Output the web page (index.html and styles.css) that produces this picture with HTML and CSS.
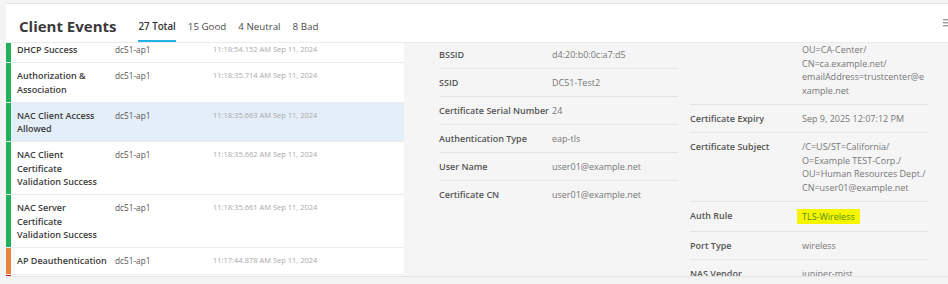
FILE: index.html
```html
<!DOCTYPE html>
<html lang="en">

<head>
    <meta charset="UTF-8">
    <meta name="viewport" content="width=device-width, initial-scale=1.0">
    <title>Client Events</title>
    <link rel="stylesheet" href="styles.css">
</head>

<body>
    <div class="card">
        <div class="card-header">
            <h1 class="title">Client Events</h1>
            <ul class="tabs">
                <li class="tab active">27 Total</li>
                <li class="tab">15 Good</li>
                <li class="tab">4 Neutral</li>
                <li class="tab">8 Bad</li>
            </ul>
            <button class="menu-btn" aria-label="Menu">
                <svg width="12" height="8" viewBox="0 0 12 8">
                    <rect x="0" y="0" width="12" height="1.4" fill="#9a9a9a" />
                    <rect x="0" y="3" width="12" height="1.4" fill="#9a9a9a" />
                    <rect x="0" y="6" width="12" height="1.4" fill="#9a9a9a" />
                </svg>
            </button>
        </div>

        <div class="card-body">
            <!-- Event list (scrolled a little) -->
            <div class="event-list">
                <div class="event-scroll">
                    <div class="event good">
                        <div class="bar"></div>
                        <div class="cells">
                            <div class="ev-name">DHCP Success</div>
                            <div class="ev-host">dc51-ap1</div>
                            <div class="ev-time">11:18:54.152 AM Sep 11, 2024</div>
                        </div>
                    </div>
                    <div class="event good">
                        <div class="bar"></div>
                        <div class="cells">
                            <div class="ev-name">Authorization &amp; Association</div>
                            <div class="ev-host">dc51-ap1</div>
                            <div class="ev-time">11:18:35.714 AM Sep 11, 2024</div>
                        </div>
                    </div>
                    <div class="event good selected">
                        <div class="bar"></div>
                        <div class="cells">
                            <div class="ev-name">NAC Client Access Allowed</div>
                            <div class="ev-host">dc51-ap1</div>
                            <div class="ev-time">11:18:35.663 AM Sep 11, 2024</div>
                        </div>
                    </div>
                    <div class="event good">
                        <div class="bar"></div>
                        <div class="cells">
                            <div class="ev-name">NAC Client Certificate Validation Success</div>
                            <div class="ev-host">dc51-ap1</div>
                            <div class="ev-time">11:18:35.662 AM Sep 11, 2024</div>
                        </div>
                    </div>
                    <div class="event good">
                        <div class="bar"></div>
                        <div class="cells">
                            <div class="ev-name">NAC Server Certificate Validation Success</div>
                            <div class="ev-host">dc51-ap1</div>
                            <div class="ev-time">11:18:35.661 AM Sep 11, 2024</div>
                        </div>
                    </div>
                    <div class="event neutral">
                        <div class="bar"></div>
                        <div class="cells">
                            <div class="ev-name">AP Deauthentication</div>
                            <div class="ev-host">dc51-ap1</div>
                            <div class="ev-time">11:17:44.878 AM Sep 11, 2024</div>
                        </div>
                    </div>
                    <div class="event bad">
                        <div class="bar"></div>
                        <div class="cells"></div>
                    </div>
                </div>
            </div>

            <!-- Event details -->
            <div class="details">
                <div class="detail-col col-left">
                    <div class="detail-row">
                        <div class="d-label">BSSID</div>
                        <div class="d-value">d4:20:b0:0c:a7:d5</div>
                    </div>
                    <div class="detail-row">
                        <div class="d-label">SSID</div>
                        <div class="d-value">DC51-Test2</div>
                    </div>
                    <div class="detail-row">
                        <div class="d-label">Certificate Serial Number</div>
                        <div class="d-value">24</div>
                    </div>
                    <div class="detail-row">
                        <div class="d-label">Authentication Type</div>
                        <div class="d-value">eap-tls</div>
                    </div>
                    <div class="detail-row">
                        <div class="d-label">User Name</div>
                        <div class="d-value">user01@example.net</div>
                    </div>
                    <div class="detail-row">
                        <div class="d-label">Certificate CN</div>
                        <div class="d-value">user01@example.net</div>
                    </div>
                </div>

                <div class="detail-col col-right">
                    <div class="detail-row">
                        <div class="d-label">Certificate Issuer</div>
                        <div class="d-value">/C=US/ST=California/ O=Example TEST-Corp./ OU=CA-Center/ CN=ca.example.net/ emailAddress=trustcenter@example.net</div>
                    </div>
                    <div class="detail-row">
                        <div class="d-label">Certificate Expiry</div>
                        <div class="d-value">Sep 9, 2025 12:07:12 PM</div>
                    </div>
                    <div class="detail-row">
                        <div class="d-label">Certificate Subject</div>
                        <div class="d-value">/C=US/ST=California/ O=Example TEST-Corp./ OU=Human Resources Dept./ CN=user01@example.net</div>
                    </div>
                    <div class="detail-row">
                        <div class="d-label">Auth Rule</div>
                        <div class="d-value"><span class="highlight">TLS-Wireless</span></div>
                    </div>
                    <div class="detail-row">
                        <div class="d-label">Port Type</div>
                        <div class="d-value">wireless</div>
                    </div>
                    <div class="detail-row">
                        <div class="d-label">NAS Vendor</div>
                        <div class="d-value">juniper-mist</div>
                    </div>
                </div>
            </div>
        </div>
    </div>
</body>

</html>
```

FILE: styles.css
```css
/* Reset styles */
* {
    margin: 0;
    padding: 0;
    box-sizing: border-box;
}

html,
body {
    overflow: hidden;
}

/* Global styles */
body {
    background-color: #f4f4f4;
    font-family: "Open Sans", "Noto Sans", Arial, sans-serif;
    color: #444;
    padding-top: 3px;
}

.card {
    width: 954px;
    margin-left: 6px;
    background-color: #fff;
    border-top: 1px solid #e6e6e6;
}

/* Header styles */
.card-header {
    display: flex;
    align-items: flex-end;
    height: 39px;
    padding-left: 13px;
    border-bottom: 1px solid #ebebeb;
}

.title {
    font-size: 15px;
    font-weight: 700;
    line-height: 20px;
    color: #3a3a3a;
    margin-bottom: 6px;
}

.tabs {
    display: flex;
    gap: 12px;
    list-style: none;
    margin-left: 22px;
}

.tab {
    font-size: 9.75px;
    line-height: 13px;
    color: #4a4a4a;
    padding-bottom: 7px;
    border-bottom: 2px solid transparent;
}

.tab.active {
    font-weight: 600;
    color: #333;
    border-bottom-color: #22b2e6;
}

.menu-btn {
    margin-left: auto;
    margin-right: 5px;
    align-self: flex-start;
    margin-top: 15px;
    border: none;
    background: none;
    width: 12px;
    height: 8px;
    display: block;
}

.menu-btn svg {
    display: block;
}

/* Body: list + details */
.card-body {
    display: flex;
    height: 234px;
    border-bottom: 1px solid #e3e3e3;
}

.event-list {
    width: 398px;
    flex-shrink: 0;
    overflow: hidden;
    background-color: #fff;
}

.event-scroll {
    margin-top: -6px;
}

.event {
    display: flex;
    border-bottom: 1px solid #ececec;
}

.event .bar {
    width: 5px;
    flex-shrink: 0;
}

.event.good .bar {
    background-color: #1fb25a;
}

.event.neutral .bar {
    background-color: #e8843d;
}

.event.bad .bar {
    background-color: #d0143c;
}

.event.selected {
    background-color: #e4eef8;
}

.cells {
    display: flex;
    flex: 1;
    padding: 6px 0 6px 6px;
    line-height: 13.3px;
    min-height: 25.3px;
}

.ev-name {
    width: 91px;
    margin-right: 7px;
    font-size: 9px;
    font-weight: 600;
    color: #3c3c3c;
}

.ev-host {
    width: 98px;
    font-size: 8.25px;
    color: #555;
}

.ev-time {
    font-size: 7.5px;
    color: #a9a9a9;
}

/* Details panel */
.details {
    flex: 1;
    display: flex;
    gap: 12px;
    padding-left: 35px;
    background-color: #f5f5f5;
    overflow: hidden;
}

.detail-col {
    flex-shrink: 0;
}

.col-left {
    width: 239px;
    margin-top: -2px;
}

.col-right {
    width: 238px;
    margin-top: -34px;
}

.detail-row {
    display: flex;
    padding: 7px 0 6.5px;
    line-height: 13.6px;
    font-size: 9px;
    border-bottom: 1px solid #e4e4e4;
}

.col-left .detail-row:last-child {
    border-bottom: none;
}

.d-label {
    width: 113px;
    flex-shrink: 0;
    font-weight: 600;
    color: #555;
}

.col-right .d-label {
    width: 112px;
}

.d-value {
    flex: 1;
    min-width: 0;
    color: #777;
    overflow-wrap: anywhere;
}

.highlight {
    display: inline-block;
    background-color: #f5f500;
    color: #55900c;
    padding: 1px 5px;
    margin-left: -5px;
    line-height: 13px;
}
```
